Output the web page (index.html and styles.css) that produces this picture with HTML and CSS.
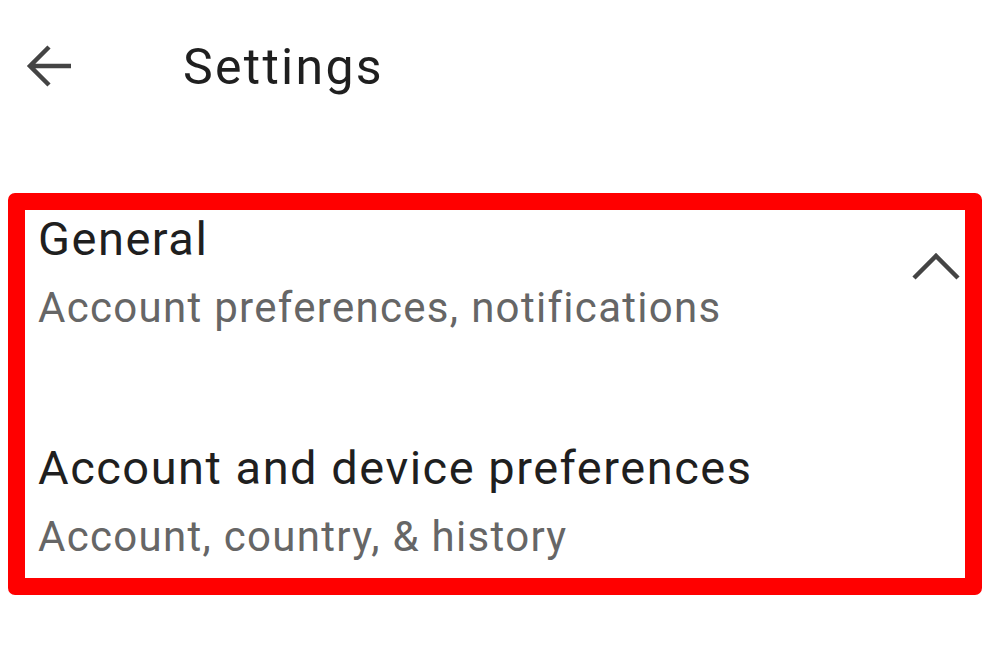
FILE: index.html
```html
<!DOCTYPE html>
<html lang="en">
<head>
<meta charset="UTF-8">
<meta name="viewport" content="width=device-width, initial-scale=1.0">
<title>Settings</title>
<link rel="stylesheet" href="styles.css">
</head>
<body>

<!-- Top bar -->
<div class="topbar">
    <svg class="back" width="48" height="48" viewBox="0 0 48 48">
        <path d="M46 23H6M24 4L5 23l19 19" fill="none" stroke="#444" stroke-width="4.5"/>
    </svg>
    <div class="title">Settings</div>
</div>

<!-- Highlighted settings list -->
<div class="card">
    <div class="item">
        <div class="texts">
            <div class="item-title">General</div>
            <div class="item-sub">Account preferences, notifications</div>
        </div>
        <svg class="chevron" width="50" height="30" viewBox="0 0 50 30">
            <path d="M3 27L25 5l22 22" fill="none" stroke="#444" stroke-width="4.5"/>
        </svg>
    </div>
    <div class="item second">
        <div class="texts">
            <div class="item-title">Account and device preferences</div>
            <div class="item-sub">Account, country, &amp; history</div>
        </div>
    </div>
</div>

</body>
</html>
```
FILE: styles.css
```css
html, body {
    margin: 0;
    height: 100%;
}

body {
    font-family: Roboto, "Open Sans", sans-serif;
    background-color: #fff;
    color: #1f1f1f;
    width: 1002px;
    height: 654px;
    overflow: hidden;
}

.topbar {
    display: flex;
    align-items: center;
    height: 134px;
    padding-left: 25px;
}

.back {
    flex: none;
}

.title {
    margin-left: 110px;
    font-size: 50px;
    letter-spacing: 2.3px;
    color: #1f1f1f;
}

.card {
    margin: 59px 20px 0 8px;
    border: 17px solid #ff0000;
    border-radius: 7px;
    height: 368px;
    padding-left: 13px;
}

.item {
    display: flex;
}

.texts {
    flex: 1;
}

.item-title {
    font-size: 47px;
    line-height: 56px;
    letter-spacing: 1.5px;
    margin-top: 1px;
    color: #1f1f1f;
}

.item-sub {
    font-size: 42px;
    line-height: 56px;
    letter-spacing: 1.3px;
    margin-top: 13px;
    color: #666;
}

.chevron {
    margin: 41px 4px 0 0;
}

.second {
    margin-top: 103px;
}
```
